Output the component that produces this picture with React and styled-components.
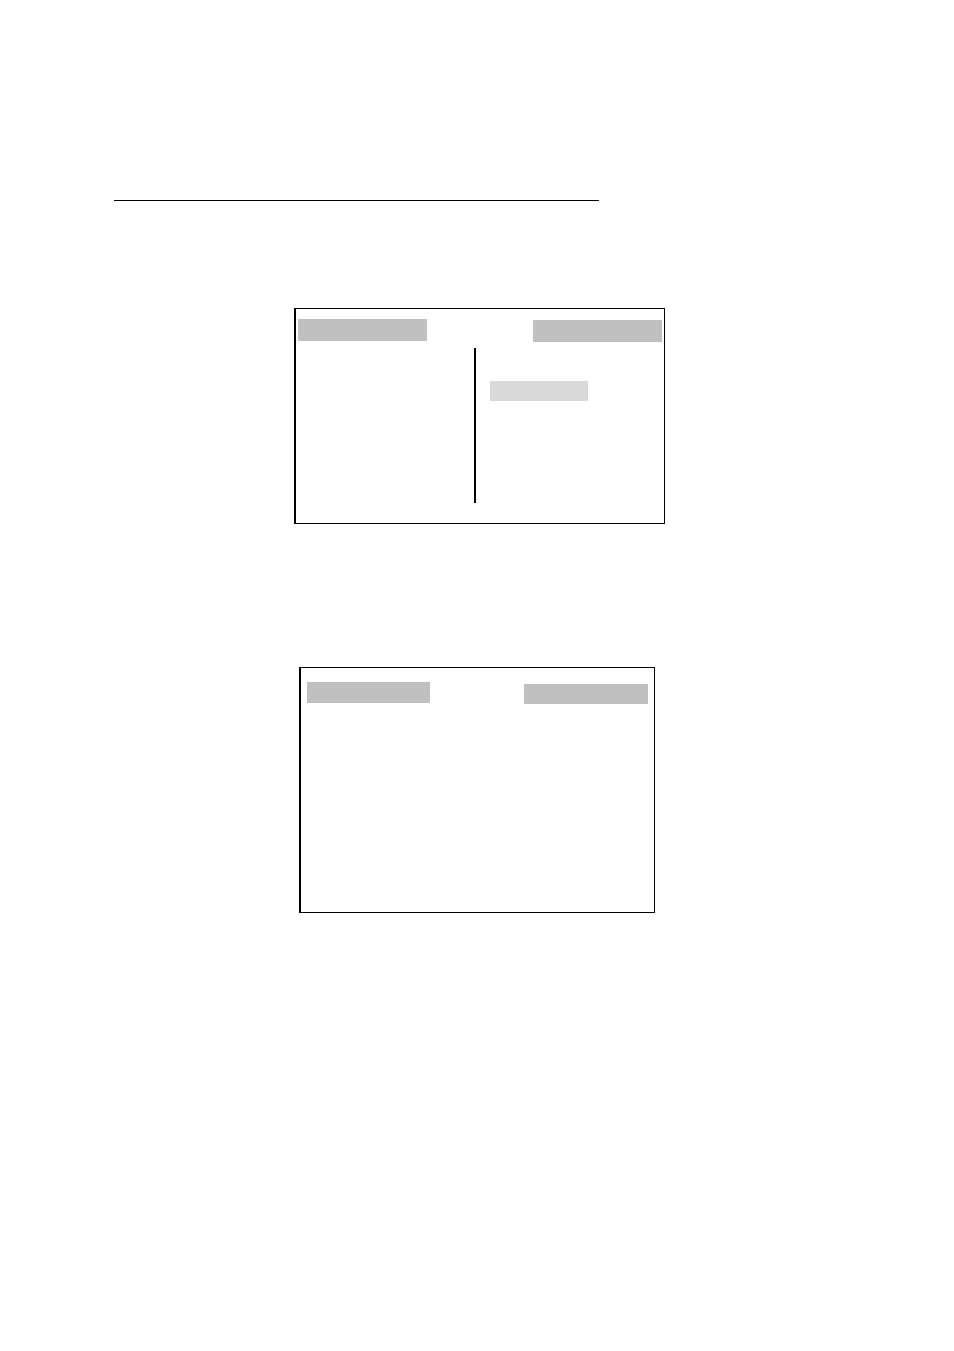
import React from "react";
import styled, { createGlobalStyle } from "styled-components";

const GlobalStyle = createGlobalStyle`
    body {
        margin: 0;
        background: white;
        font-family: "Liberation Sans", Arial, sans-serif;
    }

    * {
        box-sizing: border-box;
    }
`

const Page = styled.main`
    display: flex;
    flex-direction: column;
    min-height: 100vh;
    padding-top: 200px;
`

const Rule = styled.hr`
    width: calc(100% - 114px);
    max-width: 485px;
    height: 1px;
    margin: 0 0 107px 114px;
    border: none;
    background: black;
`

const Figure = styled.figure`
    display: flex;
    justify-content: center;
    margin: 0 0 143px;
    padding-left: ${(props) => props.$indent || 0}px;
`

const Screen = styled.section`
    width: 100%;
    max-width: ${(props) => props.$width}px;
    border: 1px solid black;
    border-left-width: 2px;
`

const Header = styled.header`
    display: flex;
    justify-content: space-between;
    padding: ${(props) => props.$padding};
`

const Bar = styled.div`
    width: ${(props) => props.$width}px;
    height: ${(props) => props.$height}px;
    background: #c0c0c0;
`

const LeftBar = styled(Bar)`
    align-self: flex-start;
    margin-bottom: 1px;
`

const RightBar = styled(Bar)`
    align-self: flex-end;
`

const Columns = styled.div`
    display: grid;
    grid-template-columns: 178fr 190fr;
    padding: 6px 0 20px;
`

const Column = styled.div`
    min-height: 155px;
`

const DividedColumn = styled(Column)`
    padding: 33px 0 0 14px;
    border-left: 2px solid black;
`

const Selection = styled.div`
    width: 98px;
    height: 20px;
    background: #d9d9d9;
`

const EmptyArea = styled.div`
    min-height: 208px;
`

export default function App() {
    return (
        <Page>
            <GlobalStyle />
            <Rule />
            <Figure $indent={5}>
                <Screen $width={371}>
                    <Header $padding="10px 2px 0">
                        <LeftBar $width={129} $height={22} />
                        <RightBar $width={129} $height={22} />
                    </Header>
                    <Columns>
                        <Column />
                        <DividedColumn>
                            <Selection />
                        </DividedColumn>
                    </Columns>
                </Screen>
            </Figure>
            <Figure>
                <Screen $width={356}>
                    <Header $padding="14px 6px 0">
                        <LeftBar $width={123} $height={21} />
                        <RightBar $width={124} $height={20} />
                    </Header>
                    <EmptyArea />
                </Screen>
            </Figure>
        </Page>
    );
}
